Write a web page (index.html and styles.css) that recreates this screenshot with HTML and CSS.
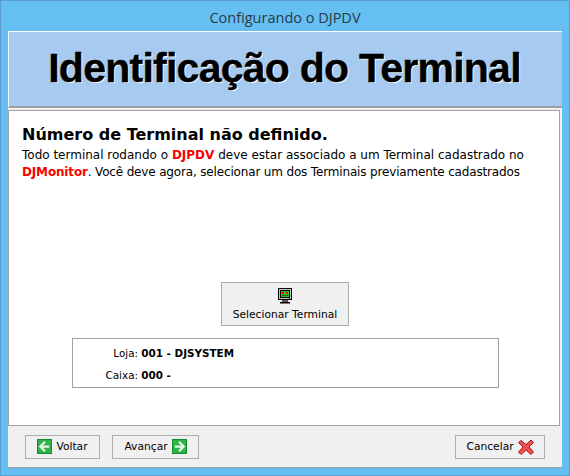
FILE: index.html
```html
<!DOCTYPE html>
<html lang="pt-BR">
<head>
    <meta charset="UTF-8">
    <title>Configurando o DJPDV</title>
    <link rel="stylesheet" href="styles.css">
</head>
<body>
    <div class="window">
        <div class="titlebar">Configurando o DJPDV</div>
        <div class="client">
            <div class="banner"><h1>Identificação do Terminal</h1></div>
            <div class="content">
                <h2>Número de Terminal não definido.</h2>
                <p class="message">Todo terminal rodando o <b>DJPDV</b> deve estar associado a um Terminal cadastrado no<br><span class="tight"><b>DJMonitor</b>. Você deve agora, selecionar um dos Terminais previamente cadastrados</span></p>
                <div class="select-area">
                    <button class="btn btn-select">
                        <svg width="16" height="16" viewBox="0 0 16 16">
                            <rect x="1.5" y="0.5" width="13" height="11" fill="#c8c8c8" stroke="#000"/>
                            <rect x="3" y="2" width="10" height="8" fill="#000"/>
                            <rect x="4" y="3" width="8" height="6" fill="#1fc71f"/>
                            <rect x="5" y="4" width="2" height="2" fill="#f00"/>
                            <rect x="9" y="4" width="2" height="2" fill="#f00"/>
                            <rect x="5" y="7" width="6" height="1" fill="#0a6a0a"/>
                            <rect x="12" y="10" width="1" height="1" fill="#f00"/>
                            <rect x="5" y="12" width="6" height="2" fill="#555"/>
                            <rect x="3" y="14" width="10" height="1.5" fill="#000"/>
                        </svg>
                        <span>Selecionar Terminal</span>
                    </button>
                </div>
                <div class="info">
                    <div class="info-row"><span class="info-label">Loja:</span> <b>001 - DJSYSTEM</b></div>
                    <div class="info-row"><span class="info-label">Caixa:</span> <b>000 -</b></div>
                </div>
            </div>
            <div class="footer">
                <button class="btn btn-nav btn-back">
                    <svg width="15" height="15" viewBox="0 0 16 16">
                        <rect width="16" height="16" fill="#128a2a"/>
                        <rect x="1" y="1" width="14" height="14" fill="#2fb24a"/>
                        <path d="M8.5 3 L3.5 8 L8.5 13 M4 8 H13" fill="none" stroke="#e4f6e0" stroke-width="2.4"/>
                    </svg>
                    Voltar
                </button>
                <button class="btn btn-nav btn-next">
                    Avançar
                    <svg width="15" height="15" viewBox="0 0 16 16">
                        <rect width="16" height="16" fill="#128a2a"/>
                        <rect x="1" y="1" width="14" height="14" fill="#2fb24a"/>
                        <path d="M7.5 3 L12.5 8 L7.5 13 M12 8 H3" fill="none" stroke="#e4f6e0" stroke-width="2.4"/>
                    </svg>
                </button>
                <button class="btn btn-nav btn-cancel">
                    Cancelar
                    <svg width="16" height="16" viewBox="0 0 16 16">
                        <path d="M3 1.5 L8 5.5 L13 1 L15.5 3.5 L11 8 L15.5 13 L13 15.5 L8 11 L3 15.5 L0.5 13 L5 8 L0.5 3.5 Z" fill="#f0504f" stroke="#a81c1c" stroke-width="1"/>
                    </svg>
                </button>
            </div>
        </div>
    </div>
</body>
</html>
```

FILE: styles.css
```css
body {
    margin: 0;
    font-family: "DejaVu Sans", sans-serif;
    font-size: 12px;
    color: #000;
}

.window {
    box-sizing: border-box;
    width: 570px;
    height: 476px;
    background: #65bff2;
    border: 1px solid #5a9fcb;
    padding: 0 7px 7px;
    display: flex;
    flex-direction: column;
}

.titlebar {
    height: 30px;
    line-height: 33px;
    text-align: center;
    font-family: "Open Sans", sans-serif;
    font-size: 14.5px;
    color: #2a3a45;
}

.client {
    flex: 1;
    display: flex;
    flex-direction: column;
    background: #f0f0f0;
    border-bottom: 1px solid #a0a0a0;
}

.banner {
    height: 74px;
    background: #a6caf0;
    border-top: 1px solid #fff;
    border-left: 1px solid #fff;
    border-bottom: 2px solid #a0a0a0;
    display: flex;
    justify-content: center;
    align-items: center;
}

h1 {
    margin: -2px 2px 0 0;
    font-family: "Liberation Sans", sans-serif;
    font-size: 41px;
    font-weight: bold;
    letter-spacing: -0.75px;
    -webkit-text-stroke: 0.4px #000;
    text-shadow: 1px 1px 0 #fff;
}

.content {
    flex: 1;
    margin-top: 2px;
    margin-right: 2px;
    padding: 13px 13px 0;
    background: #fff;
    border: 1px solid #a0a0a0;
    display: flex;
    flex-direction: column;
}

h2 {
    margin: 0;
    font-size: 16px;
    line-height: 21px;
}

.message {
    margin: 2px 0 0;
    line-height: 17px;
}

.message b {
    color: #f00;
}

.tight {
    letter-spacing: -0.16px;
}

.select-area {
    margin-top: 101px;
    padding-left: 2px;
    display: flex;
    justify-content: center;
}

.btn {
    font-family: "DejaVu Sans", sans-serif;
    font-size: 10.7px;
    background: #f0f0f0;
    border: 1px solid #adadad;
    color: #000;
    padding: 0;
}

.btn-select {
    width: 128px;
    height: 44px;
    display: flex;
    flex-direction: column;
    align-items: center;
    justify-content: center;
    gap: 4px;
}

.info {
    box-sizing: border-box;
    width: 427px;
    height: 50px;
    margin: 12px 0 0 50px;
    border: 1px solid #a0a0a0;
    padding: 6px 0 0;
    display: flex;
    flex-direction: column;
    gap: 6px;
    font-size: 10.4px;
}

.info-row {
    line-height: 16px;
}

.info-label {
    display: inline-block;
    width: 65px;
    text-align: right;
}

.footer {
    height: 41px;
    padding: 0 17px;
    display: flex;
    align-items: center;
    gap: 12px;
}

.btn-nav {
    height: 24px;
    display: flex;
    align-items: center;
    justify-content: center;
    gap: 4px;
}

.btn-back {
    width: 75px;
}

.btn-next {
    width: 87px;
}

.btn-cancel {
    width: 90px;
    margin-left: auto;
}
```
